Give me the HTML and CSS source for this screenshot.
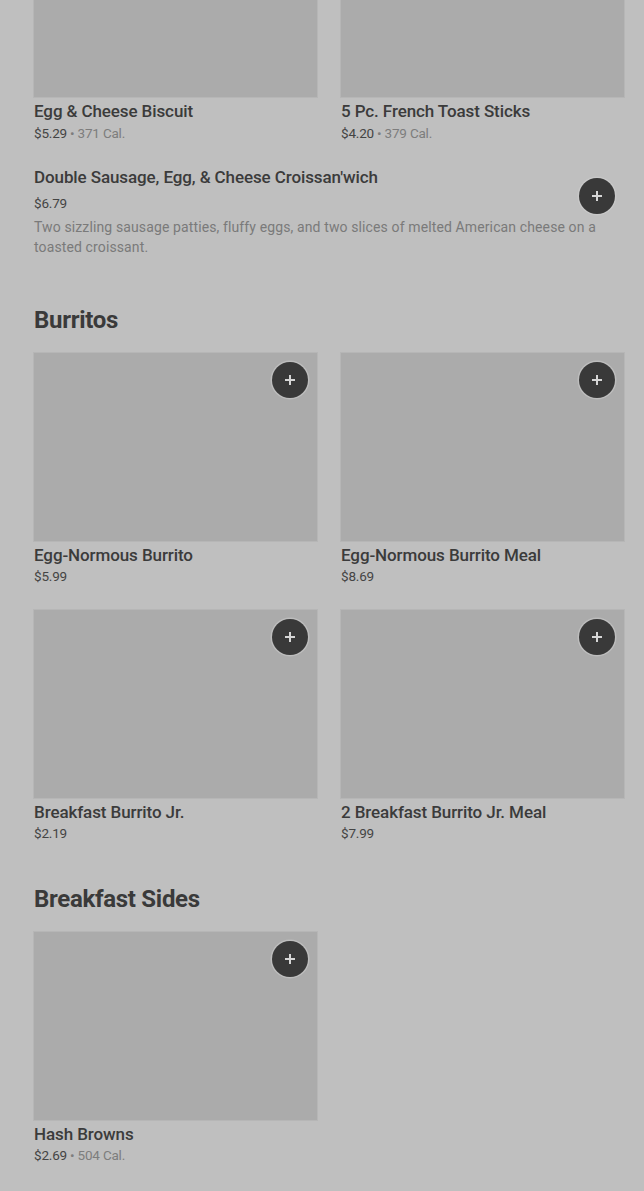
FILE: index.html
```html
<!DOCTYPE html>
<html lang="en">
<head>
<meta charset="utf-8">
<link rel="stylesheet" href="styles.css">
</head>
<body>
<main class="menu">
  <section class="grid first">
    <div class="card">
      <div class="img"></div>
      <div class="title">Egg &amp; Cheese Biscuit</div>
      <div class="price">$5.29 <span class="cal">• 371 Cal.</span></div>
    </div>
    <div class="card">
      <div class="img"></div>
      <div class="title">5 Pc. French Toast Sticks</div>
      <div class="price">$4.20 <span class="cal">• 379 Cal.</span></div>
    </div>
  </section>

  <section class="row-item">
    <div class="title row-title">Double Sausage, Egg, &amp; Cheese Croissan'wich</div>
    <div class="price row-price">$6.79</div>
    <button class="add row-add" aria-label="Add"><svg viewBox="0 0 14 14" width="14" height="14"><path d="M7 2v10M2 7h10" stroke="currentColor" stroke-width="2" fill="none"/></svg></button>
    <div class="desc">Two sizzling sausage patties, fluffy eggs, and two slices of melted American cheese on a toasted croissant.</div>
  </section>

  <h2 class="heading">Burritos</h2>
  <section class="grid">
    <div class="card">
      <div class="img"><button class="add" aria-label="Add"><svg viewBox="0 0 14 14" width="14" height="14"><path d="M7 2v10M2 7h10" stroke="currentColor" stroke-width="2" fill="none"/></svg></button></div>
      <div class="title">Egg-Normous Burrito</div>
      <div class="price">$5.99</div>
    </div>
    <div class="card">
      <div class="img"><button class="add" aria-label="Add"><svg viewBox="0 0 14 14" width="14" height="14"><path d="M7 2v10M2 7h10" stroke="currentColor" stroke-width="2" fill="none"/></svg></button></div>
      <div class="title">Egg-Normous Burrito Meal</div>
      <div class="price">$8.69</div>
    </div>
    <div class="card">
      <div class="img"><button class="add" aria-label="Add"><svg viewBox="0 0 14 14" width="14" height="14"><path d="M7 2v10M2 7h10" stroke="currentColor" stroke-width="2" fill="none"/></svg></button></div>
      <div class="title">Breakfast Burrito Jr.</div>
      <div class="price">$2.19</div>
    </div>
    <div class="card">
      <div class="img"><button class="add" aria-label="Add"><svg viewBox="0 0 14 14" width="14" height="14"><path d="M7 2v10M2 7h10" stroke="currentColor" stroke-width="2" fill="none"/></svg></button></div>
      <div class="title">2 Breakfast Burrito Jr. Meal</div>
      <div class="price">$7.99</div>
    </div>
  </section>

  <h2 class="heading sides">Breakfast Sides</h2>
  <section class="grid">
    <div class="card">
      <div class="img"><button class="add" aria-label="Add"><svg viewBox="0 0 14 14" width="14" height="14"><path d="M7 2v10M2 7h10" stroke="currentColor" stroke-width="2" fill="none"/></svg></button></div>
      <div class="title">Hash Browns</div>
      <div class="price">$2.69 <span class="cal">• 504 Cal.</span></div>
    </div>
  </section>
</main>
</body>
</html>
```

FILE: styles.css
```css
html, body {
  margin: 0;
  padding: 0;
  background: #bfbfbf;
  overflow: hidden;
}
body {
  font-family: Roboto, "Liberation Sans", sans-serif;
  color: #3c3c3c;
}
.menu {
  padding: 0 20px 0 34px;
  margin-top: -91px;
}
.grid {
  display: grid;
  grid-template-columns: 283px 283px;
  column-gap: 24px;
  row-gap: 24px;
}
.card {
  display: flex;
  flex-direction: column;
}
.img {
  position: relative;
  height: 188px;
  background: #ababab;
  box-shadow: 0 0 0 1px #b6b6b6;
}
.title {
  font-size: 17px;
  font-weight: 500;
  line-height: 20px;
  margin-top: 4px;
  color: #3b3b3b;
  letter-spacing: -0.1px;
}
.price {
  font-size: 13.5px;
  line-height: 20px;
  margin-top: 1px;
  color: #444;
  letter-spacing: -0.2px;
}
.first .price {
  margin-top: 2px;
}
.cal {
  color: #7d7d7d;
}

.row-item {
  display: grid;
  grid-template-columns: 1fr auto;
  margin-top: 24px;
}
.row-title {
  grid-column: 1;
  grid-row: 1;
  margin-top: 0;
}
.row-price {
  grid-column: 1;
  grid-row: 2;
  margin-top: 5px;
}
.desc {
  grid-column: 1 / 3;
  grid-row: 3;
  font-size: 14px;
  line-height: 20px;
  color: #7a7a7a;
  margin-top: 3px;
  letter-spacing: 0.12px;
}
.add {
  position: absolute;
  top: 9px;
  right: 9px;
  width: 36px;
  height: 36px;
  border-radius: 50%;
  border: none;
  padding: 0;
  background: #393939;
  color: #d6d6d6;
  display: flex;
  align-items: center;
  justify-content: center;
  box-shadow: 0 0 0 1.5px rgba(210,210,210,0.45);
  cursor: pointer;
}
.row-add {
  position: static;
  grid-column: 2;
  grid-row: 1 / 3;
  align-self: start;
  margin-top: 11px;
  margin-right: 9px;
  margin-left: 12px;
}
.heading {
  font-size: 24px;
  font-weight: 700;
  line-height: 32px;
  margin: 47px 0 17px;
  color: #3a3a3a;
  letter-spacing: -0.3px;
}
.heading.sides {
  margin-top: 40px;
}
```
